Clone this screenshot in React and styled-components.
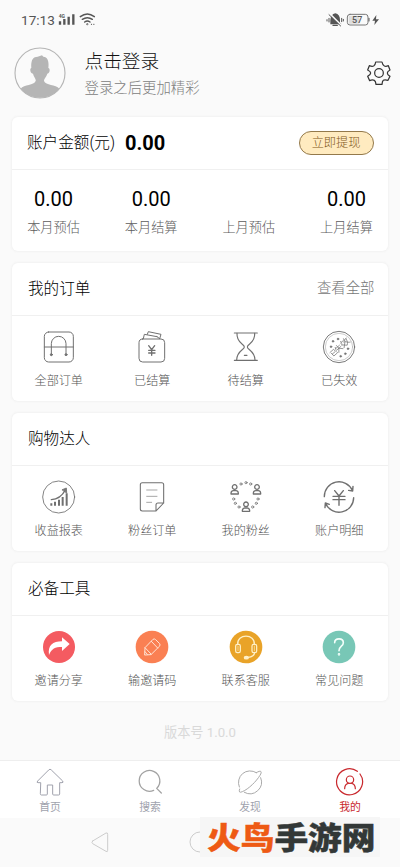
import React from "react";
import styled, { createGlobalStyle } from "styled-components";

const GlobalStyle = createGlobalStyle`
  * { box-sizing: border-box; }
  body {
    margin: 0;
    background: #fafafa;
    font-family: Roboto, "Noto Sans CJK SC", sans-serif;
    color: #333;
  }
`;

const Screen = styled.div`
  width: 400px;
  height: 867px;
  display: flex;
  flex-direction: column;
  overflow: hidden;
  background: #fafafa;
`;

const StatusBar = styled.header`
  height: 40px;
  flex: none;
  display: flex;
  align-items: center;
  padding: 0 20px 0 21px;
  color: #555;
`;

const Clock = styled.span`
  font-size: 13.6px;
  line-height: 20px;
  width: 37px;
  white-space: nowrap;
`;

const StatusRight = styled.div`
  margin-left: auto;
  display: flex;
  align-items: center;
`;

const Svg = styled.svg`
  display: block;
  flex: none;
  fill: none;
  stroke: ${(p) => p.$color || "#707070"};
  stroke-width: ${(p) => p.$weight || 3};
  stroke-linecap: round;
  stroke-linejoin: round;
`;

const Profile = styled.section`
  height: 77px;
  flex: none;
  display: flex;
  padding: 7px 8.5px 0 14px;
`;

const ProfileText = styled.div`
  flex: 1;
  padding: 1px 0 0 18.5px;
`;

const LoginTitle = styled.div`
  font-size: 18.7px;
  line-height: 28px;
  font-weight: 300;
  color: #111;
`;

const LoginHint = styled.div`
  font-size: 14.4px;
  line-height: 22px;
  margin-top: 2px;
  font-weight: 300;
  color: #808080;
`;

const SettingsButton = styled.div`
  padding-top: 13px;
`;

const Card = styled.section`
  flex: none;
  margin: 0 12px 12px;
  height: ${(p) => p.$height || 138}px;
  background: #fff;
  border-radius: 6px;
  box-shadow: 0 0 2px 1px #f2f2f2;
`;

const CardHeader = styled.div`
  height: 53px;
  display: flex;
  align-items: center;
  padding: 0 13.5px 0 ${(p) => p.$left || 16}px;
  border-bottom: 1px solid #f0f0f0;
`;

const CardTitle = styled.h2`
  margin: 0;
  font-size: 15.6px;
  line-height: 24px;
  font-weight: 300;
  color: #000;
`;

const Balance = styled.span`
  margin-left: 10px;
  font-size: 20px;
  font-weight: 700;
  color: #000;
`;

const WithdrawButton = styled.div`
  margin-left: auto;
  margin-right: 1px;
  width: 75px;
  height: 24px;
  border: 1px solid #93794b;
  border-radius: 12px;
  background: #ffebc0;
  color: #805820;
  font-size: 12.2px;
  line-height: 22px;
  font-weight: 300;
  text-align: center;
`;

const MoreLink = styled.span`
  margin-left: auto;
  font-size: 14.4px;
  line-height: 22px;
  padding-top: 1px;
  font-weight: 300;
  color: #777;
`;

const StatRow = styled.div`
  display: flex;
  justify-content: space-between;
  padding: 14px 15px 0;
`;

const Stat = styled.div`
  width: 53px;
  text-align: center;
  white-space: nowrap;
`;

const StatValue = styled.div`
  height: 30px;
  font-size: 20px;
  line-height: 30px;
  color: #000;
`;

const StatLabel = styled.div`
  font-size: 13.2px;
  line-height: 20px;
  margin-top: 4px;
  font-weight: 300;
  color: #5c5c5c;
`;

const IconGrid = styled.div`
  display: grid;
  grid-template-columns: repeat(4, 1fr);
  padding: 13px 2px 0 0;
`;

const IconCell = styled.div`
  display: flex;
  flex-direction: column;
  align-items: center;
`;

const IconLabel = styled.div`
  margin-top: 6px;
  font-size: 12.1px;
  line-height: 20px;
  font-weight: 300;
  color: #555;
`;

const Version = styled.div`
  flex: 1;
  text-align: center;
  font-size: 13.2px;
  line-height: 20px;
  padding-top: 10px;
  color: #d9d9d9;
`;

const TabBar = styled.nav`
  flex: none;
  height: 58px;
  display: grid;
  grid-template-columns: repeat(4, 1fr);
  background: #fff;
  border-top: 1px solid #eee;
`;

const Tab = styled.div`
  display: flex;
  flex-direction: column;
  align-items: center;
  padding-top: 6px;
  color: ${(p) => (p.$active ? "#c9282d" : "#a0a2ad")};
`;

const TabLabel = styled.span`
  font-size: 10.8px;
  line-height: 16px;
  margin-top: 3px;
`;

const SystemNav = styled.footer`
  flex: none;
  position: relative;
  height: 49px;
  display: grid;
  grid-template-columns: 200px 200px;
  background: #fafafa;
`;

const NavKey = styled.div`
  display: flex;
  justify-content: center;
  padding-top: 6px;
`;

const HomeKey = styled.div`
  margin: 8px 0 0 -12px;
`;

const Watermark = styled.div`
  position: absolute;
  left: 200px;
  top: -1px;
  width: 180px;
  height: 40px;
  padding-left: 7px;
  background: #f6f6f6;
  color: #333837;
  font-family: "Noto Sans CJK SC", sans-serif;
  font-size: 33.7px;
  line-height: 38px;
  font-weight: 900;
  white-space: nowrap;
`;

const WatermarkText = styled.div`
  transform: scaleY(0.91);
  -webkit-text-stroke: 0.5px currentColor;
`;

const WatermarkAccent = styled.span`
  color: #ee5a14;
  -webkit-text-stroke-color: #ee5a14;
`;

const glyphs = {
  bag: (
    <Svg width="36" height="36" viewBox="123 208 108 108" $weight={3}>
      <rect x="133" y="217" width="87" height="90" rx="13" />
      <path d="M133 262H220M154 284V252a22 22 0 0 1 44 0V284" />
      <circle cx="154" cy="285" r="3" fill="#777" />
      <circle cx="198" cy="285" r="3" fill="#777" />
    </Svg>
  ),
  wallet: (
    <Svg width="36" height="36" viewBox="403 208 108 108" $weight={3}>
      <rect x="418" y="238" width="77" height="69" rx="11" />
      <path d="M431 237L434 224L472 231M443 224L446 216L484 224L480 237M472 231L480 237" />
      <path d="M447 258L456 270L465 258M456 270V287M447 272H466M447 280H466" strokeWidth="4" />
    </Svg>
  ),
  hourglass: (
    <Svg width="36" height="36" viewBox="83 208 108 108" $weight={3.4}>
      <path d="M102 220H171M102 302H171" />
      <path d="M110 221C108 251 132 252 132 262C132 270 109 274 109 301M163 221C165 251 141 252 141 262C141 270 164 274 164 301M132 287H140" />
    </Svg>
  ),
  expired: (
    <Svg width="36" height="36" viewBox="363 208 108 108" $weight={2.8}>
      <circle cx="417" cy="262" r="47" />
      <circle cx="417" cy="262" r="41" stroke="#aaa" strokeWidth="1.8" />
      <g transform="translate(416 265) rotate(-42) scale(0.92)" strokeWidth="2.2">
        <path d="M-31 -8H-15V1H-29V-3V9H-13V5" />
        <path d="M-7 -9L-10 -3M-8 -5H8M-10 1H9M0 -11V1L-9 11M0 1L9 11" />
        <path d="M15 -8H28M19 -12V-8M17 -4L14 0M25 -4L28 0M16 1L26 11M26 1L14 11M32 -12L29 -2M31 -7H40M38 -7C37 1 34 7 28 11M31 -1C33 5 37 9 41 11" />
      </g>
      <g fill="#777" strokeWidth="1">
        <circle cx="399" cy="245" r="3" /><circle cx="414" cy="238" r="3" />
        <circle cx="393" cy="261" r="3" /><circle cx="444" cy="267" r="3" />
        <circle cx="436" cy="282" r="3" /><circle cx="422" cy="290" r="3" />
      </g>
    </Svg>
  ),
  report: (
    <Svg width="36" height="36" viewBox="123 208 108 108" $weight={2.6}>
      <circle cx="176" cy="262" r="48" />
      <path d="M154 281V288M165 276V288M177 270V288M188 262V288M200 251V288" strokeWidth="6" strokeLinecap="butt" />
      <path d="M154 270C172 269 188 256 196 241" strokeWidth="4.2" />
      <path d="M187 240L199 235L200 249Z" fill="#777" />
    </Svg>
  ),
  note: (
    <Svg width="36" height="36" viewBox="403 208 108 108" $weight={3.2}>
      <path d="M492 280V225Q492 219 486 219H428Q422 219 422 225V298Q422 304 428 304H469L492 280H475Q469 280 469 286V304" />
      <path d="M441 241H472M441 260H472M441 278H456" stroke="#999" strokeWidth="2.6" />
    </Svg>
  ),
  fans: (
    <Svg width="36" height="36" viewBox="83 208 108 108" $weight={3.8}>
      {[[103, 232], [170, 232], [137, 284]].map(([x, y]) => (
        <g key={`${x}-${y}`} transform={`translate(${x} ${y})`}>
          <circle r="7" />
          <path d="M-11 21V18Q-10 11 -4 11H4Q10 11 11 18V21Z" />
        </g>
      ))}
      <g strokeWidth="2.4">
        {[[122, 223], [137, 219], [151, 223], [100, 268], [105, 281], [116, 292], [173, 268], [168, 281], [157, 292]].map(([x, y]) => (
          <circle key={`${x}-${y}`} cx={x} cy={y} r="3.3" />
        ))}
      </g>
    </Svg>
  ),
  ledger: (
    <Svg width="36" height="36" viewBox="363 208 108 108" $weight={4.2}>
      <path d="M373 261A44 44 0 0 1 457 242M459 230L458 244L446 242M461 264A44 44 0 0 1 377 282M375 294L376 280L388 284" />
      <path d="M404 243L417 259L430 243M399 260H435M399 270H435M417 259V287" />
    </Svg>
  ),
  share: (
    <Svg width="36" height="36" viewBox="123 208 108 108" $color="none">
      <circle cx="177" cy="262" r="48" fill="#f45b61" />
      <path d="M147 286C143 257 158 245 186 245V233L209 253L186 274V262C165 262 155 267 147 286Z" fill="#fff" />
    </Svg>
  ),
  pencil: (
    <Svg width="36" height="36" viewBox="403 208 108 108" $color="#ffe5d6" $weight={3}>
      <circle cx="457" cy="262" r="49" fill="#fa8053" stroke="none" />
      <path d="M435 285L436 264L460 239Q464 236 468 240L480 252Q483 256 479 260L455 284ZM436 264L455 284M455 245L474 265M436 276L443 284" />
    </Svg>
  ),
  support: (
    <Svg width="36" height="36" viewBox="83 208 108 108" $color="#fff0c7" $weight={3.7}>
      <circle cx="137" cy="262" r="49" fill="#e9a328" stroke="none" />
      <path d="M112 255C109 221 165 221 162 255M163 278Q162 291 143 293" />
      <rect x="106" y="254" width="14" height="25" rx="5" />
      <rect x="155" y="254" width="14" height="25" rx="5" />
      <path d="M113 260V273M162 260V273" strokeWidth="2" />
      <ellipse cx="138" cy="294" rx="6" ry="4" fill="#fff0c7" />
    </Svg>
  ),
  help: (
    <Svg width="36" height="36" viewBox="363 208 108 108" $color="#f4fffb" $weight={4.8}>
      <circle cx="417" cy="262" r="49" fill="#78c7b6" stroke="none" />
      <path d="M404 249C404 234 430 234 430 249C430 260 417 259 417 273" />
      <circle cx="417" cy="284" r="1.5" />
    </Svg>
  ),
  home: (
    <Svg width="30" height="30" viewBox="105 170 90 90" $color="currentColor" $weight={3}>
      <path d="M121 217H114Q109 217 113 212L146 179Q150 174 154 179L188 212Q191 217 186 217H179V251Q179 254 176 254H161Q158 254 158 251V224H142V251Q142 254 139 254H124Q121 254 121 251Z" />
    </Svg>
  ),
  search: (
    <Svg width="30" height="30" viewBox="405 170 90 90" $color="#a2a2a2" $weight={3.8}>
      <path d="M461 240A31 31 0 1 1 470 234L484 248" />
    </Svg>
  ),
  discover: (
    <Svg width="30" height="30" viewBox="105 170 90 90" $color="#aaa" $weight={3}>
      <path d="M118 230A35 35 0 0 1 169 187M182 202A35 35 0 0 1 133 246M169 187C182 179 188 182 180 195C169 213 146 236 127 244Q114 250 119 236" />
    </Svg>
  ),
  mine: (
    <Svg width="30" height="30" viewBox="405 170 90 90" $color="currentColor" $weight={3.6}>
      <path d="M480 191A39 39 0 1 1 472 183" />
      <circle cx="450" cy="208" r="11" />
      <path d="M434 235C434 224 440 220 445 219M466 235C466 224 460 220 455 219" />
    </Svg>
  ),
};

const stats = [
  ["0.00", "本月预估"],
  ["0.00", "本月结算"],
  ["", "上月预估"],
  ["0.00", "上月结算"],
];

const sections = [
  {
    title: "我的订单",
    more: "查看全部",
    items: [["bag", "全部订单"], ["wallet", "已结算"], ["hourglass", "待结算"], ["expired", "已失效"]],
  },
  {
    title: "购物达人",
    items: [["report", "收益报表"], ["note", "粉丝订单"], ["fans", "我的粉丝"], ["ledger", "账户明细"]],
  },
  {
    title: "必备工具",
    items: [["share", "邀请分享"], ["pencil", "输邀请码"], ["support", "联系客服"], ["help", "常见问题"]],
  },
];

const tabs = [["home", "首页"], ["search", "搜索"], ["discover", "发现"], ["mine", "我的"]];

const NetworkText = styled.text`
  font: 700 15px Roboto, sans-serif;
  fill: #555;
  stroke: none;
`;

const BatteryText = styled.text`
  font: 500 27px Roboto, sans-serif;
  fill: #555;
  stroke: none;
`;

function StatusIcons() {
  return (
    <>
      <Svg width="38" height="16" viewBox="177 38 114 48" $color="#555" $weight={4.2}>
        <NetworkText x="179" y="55">4G</NetworkText>
        <path d="M183 66V76M196 59V76M209 52V76M223 45V76" strokeWidth="7" strokeLinecap="butt" />
        <path d="M244 52Q265 36 286 52M250 60Q265 50 280 60M257 68Q265 62 273 68" />
        <circle cx="265" cy="75" r="1" />
        <path d="M277 75H278M284 75H285" strokeWidth="3" />
      </Svg>
      <StatusRight>
        <Svg width="54" height="18" viewBox="379 34 162 54" $color="#555" $weight={3}>
          <path d="M392 73V61Q393 44 407 41Q421 44 421 61V69L426 74H392Z" fill="#555" stroke="none" />
          <path d="M400 77H413" strokeWidth="4" />
          <path d="M390 42L425 77" stroke="#fafafa" strokeWidth="5" />
          <path d="M388 45L423 79M388 56V67M382 60V64M426 56V66M431 59V64" />
          <rect x="443" y="44" width="62" height="32" rx="8" stroke="#777" />
          <path d="M449 48H479V72H449Q447 72 447 68V52Q447 48 449 48Z" fill="#ddd" stroke="none" />
          <path d="M508 56V64" />
          <BatteryText x="457" y="70" textLength="31">57</BatteryText>
          <path d="M530 46L518 63H526L524 76L538 59H529Z" fill="#555" stroke="none" />
        </Svg>
      </StatusRight>
    </>
  );
}

function Avatar() {
  return (
    <Svg width="52" height="52" viewBox="42 142 156 156" $color="#b5b5b5" $weight={3.4}>
      <circle cx="120" cy="220" r="75" fill="#fafafa" stroke="none" />
      <path d="M62 267C72 254 102 258 107 244C109 239 101 231 99 222C91 222 88 207 94 205C92 184 98 171 113 171L126 167L130 171C145 173 147 187 145 205C152 207 149 221 142 222C139 233 131 238 132 244C137 258 167 254 178 267A75 75 0 0 1 62 267Z" fill="#b5b5b5" stroke="none" />
      <circle cx="120" cy="220" r="75" />
    </Svg>
  );
}

export default function App() {
  return (
    <Screen>
      <GlobalStyle />
      <StatusBar>
        <Clock>17:13</Clock>
        <StatusIcons />
      </StatusBar>
      <Profile>
        <Avatar />
        <ProfileText>
          <LoginTitle>点击登录</LoginTitle>
          <LoginHint>登录之后更加精彩</LoginHint>
        </ProfileText>
        <SettingsButton>
          <Svg width="26" height="26" viewBox="498 181 78 78" $color="#333" $weight={3.7}>
            <circle cx="537" cy="220" r="13" />
            <path d="M527 187H546Q548 197 553 199Q558 201 565 198L570 211Q562 215 562 220Q562 226 570 230L564 242Q554 239 550 242Q547 244 546 254H528Q527 244 523 242Q517 239 509 243L503 230Q512 225 512 220Q512 215 503 211L508 198Q516 201 521 199Q526 196 527 187Z" />
          </Svg>
        </SettingsButton>
      </Profile>

      <Card $height={133.5}>
        <CardHeader $left={15}>
          <CardTitle>账户金额(元)</CardTitle>
          <Balance>0.00</Balance>
          <WithdrawButton>立即提现</WithdrawButton>
        </CardHeader>
        <StatRow>
          {stats.map(([value, label]) => (
            <Stat key={label}>
              <StatValue>{value}</StatValue>
              <StatLabel>{label}</StatLabel>
            </Stat>
          ))}
        </StatRow>
      </Card>

      {sections.map((section) => (
        <Card key={section.title}>
          <CardHeader>
            <CardTitle>{section.title}</CardTitle>
            {section.more && <MoreLink>{section.more}</MoreLink>}
          </CardHeader>
          <IconGrid>
            {section.items.map(([icon, label]) => (
              <IconCell key={label}>
                {glyphs[icon]}
                <IconLabel>{label}</IconLabel>
              </IconCell>
            ))}
          </IconGrid>
        </Card>
      ))}

      <Version>版本号 1.0.0</Version>
      <TabBar>
        {tabs.map(([icon, label]) => (
          <Tab key={label} $active={icon === "mine"}>
            {glyphs[icon]}
            <TabLabel>{label}</TabLabel>
          </Tab>
        ))}
      </TabBar>
      <SystemNav>
        <NavKey>
          <Svg width="24" height="36" viewBox="264 342 72 108" $color="#ccc">
            <path d="M278 393L318 369Q323 367 323 373V421Q323 427 318 424L278 401Q273 397 278 393Z" />
          </Svg>
        </NavKey>
        <HomeKey>
          <Svg width="24" height="32" viewBox="0 0 24 32" $color="#ccc" $weight={1}>
            <circle cx="12" cy="16" r="10" />
          </Svg>
        </HomeKey>
        <Watermark>
          <WatermarkText>
            <WatermarkAccent>火鸟</WatermarkAccent>手游网
          </WatermarkText>
        </Watermark>
      </SystemNav>
    </Screen>
  );
}
